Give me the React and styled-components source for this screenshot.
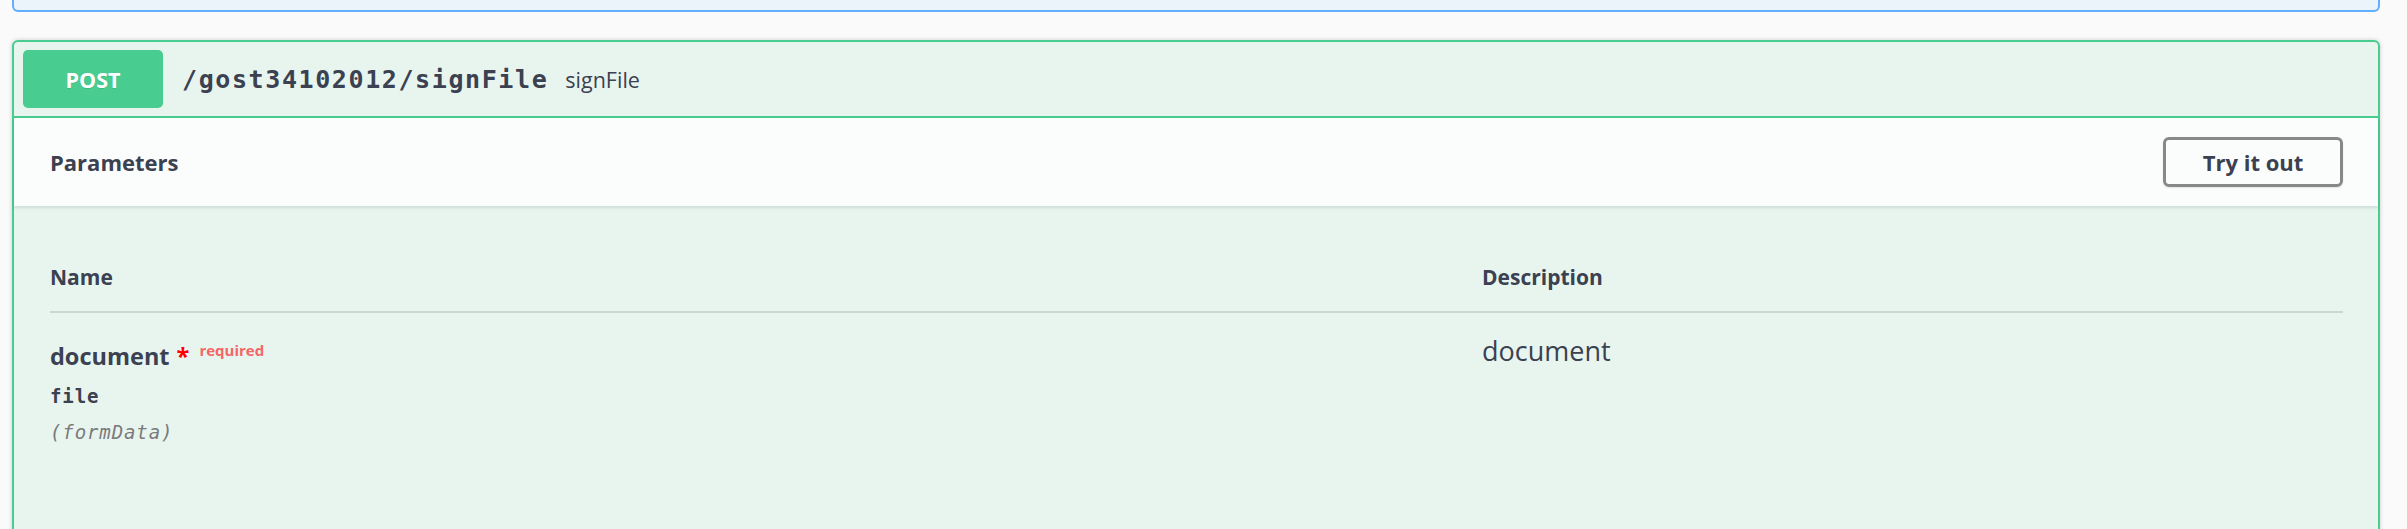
import React from "react";
import styled, { createGlobalStyle } from "styled-components";

const GlobalStyle = createGlobalStyle`
  html, body {
    margin: 0;
    padding: 0;
    background: #fafafa;
  }
  body {
    font-family: "Open Sans", "Noto Sans", sans-serif;
    color: #3b4151;
  }
`

const Page = styled.div`
  width: 2407px;
  height: 529px;
  overflow: hidden;
  box-sizing: border-box;
  padding: 0 27px 0 12px;
  background: #fafafa;
`
const PrevBlock = styled.div`
  height: 10px;
  background: #ebf3fb;
  border: 2px solid #61affe;
  border-top: none;
  border-radius: 0 0 6px 6px;
`
const OpBlock = styled.div`
  margin-top: 28px;
  background: #e8f5ef;
  border: 2px solid #49cc90;
  border-radius: 6px;
  box-shadow: 0 0 4px rgba(0, 0, 0, 0.19);
`
const Summary = styled.div`
  display: flex;
  align-items: center;
  padding: 8px 9px;
  border-bottom: 2px solid #49cc90;
`
const Method = styled.div`
  width: 140px;
  height: 58px;
  display: flex;
  align-items: center;
  justify-content: center;
  border-radius: 5px;
  background: #49cc90;
  color: #fff;
  font-size: 21.5px;
  font-weight: 700;
  text-shadow: 0 1px 0 rgba(0, 0, 0, 0.1);
`
const Path = styled.span`
  margin-left: 19px;
  font-family: "DejaVu Sans Mono", monospace;
  font-size: 25px;
  font-weight: 600;
  letter-spacing: 1.6px;
  color: #3b4151;
`
const SummaryDesc = styled.span`
  margin-left: 17px;
  font-size: 21.5px;
  color: #3b4151;
`
const SectionHeader = styled.div`
  position: relative;
  z-index: 1;
  height: 88px;
  box-sizing: border-box;
  display: flex;
  align-items: center;
  justify-content: space-between;
  padding: 0 35px 0 36px;
  background: #fbfdfc;
  box-shadow: 0 2px 3px rgba(0, 0, 0, 0.1);
`
const SectionTitle = styled.h4`
  margin: 0;
  font-size: 22px;
  font-weight: 700;
`
const TryButton = styled.button`
  width: 180px;
  height: 50px;
  border: 3px solid #888;
  border-radius: 6px;
  background: transparent;
  box-shadow: 0 1px 2px rgba(0, 0, 0, 0.1);
  font-family: "Open Sans", sans-serif;
  font-size: 22px;
  font-weight: 700;
  color: #3b4151;
`
const ParamsBody = styled.div`
  padding: 57px 35px 160px 36px;
`
const Row = styled.div`
  display: grid;
  grid-template-columns: 1432px 1fr;
  padding: ${p => (p.$head ? "0 0 19px" : "21px 0 0")};
  border-bottom: ${p => (p.$head ? "2px solid #ccd7d2" : "none")};
`
const HeadCell = styled.div`
  font-size: 21px;
  line-height: 29px;
  font-weight: 700;
`
const NameCell = styled.div`
  display: flex;
  flex-direction: column;
`
const ParamName = styled.div`
  font-size: 23.5px;
  line-height: 32px;
  font-weight: 700;
`
const Star = styled.span`
  margin-left: 7px;
  color: #f00;
`
const Required = styled.span`
  margin-left: 10px;
  vertical-align: 9px;
  font-size: 15px;
  font-weight: 700;
  color: #f46666;
`
const MonoLine = styled.div`
  margin-top: ${p => p.$gap}px;
  font-family: "DejaVu Sans Mono", monospace;
  font-size: 19px;
  line-height: 24px;
  letter-spacing: 0.9px;
  font-weight: ${p => (p.$muted ? 400 : 600)};
  font-style: ${p => (p.$muted ? "italic" : "normal")};
  color: ${p => (p.$muted ? "#7a7a7a" : "#3b4151")};
`
const DescCell = styled.div`
  font-size: 27px;
  line-height: 34px;
`

export default function App() {
  return (
    <>
      <GlobalStyle />
      <Page>
        <PrevBlock />
        <OpBlock>
          <Summary>
            <Method>POST</Method>
            <Path>/gost34102012/signFile</Path>
            <SummaryDesc>signFile</SummaryDesc>
          </Summary>
          <SectionHeader>
            <SectionTitle>Parameters</SectionTitle>
            <TryButton>Try it out</TryButton>
          </SectionHeader>
          <ParamsBody>
            <Row $head>
              <HeadCell>Name</HeadCell>
              <HeadCell>Description</HeadCell>
            </Row>
            <Row>
              <NameCell>
                <ParamName>
                  document<Star>*</Star>
                  <Required>required</Required>
                </ParamName>
                <MonoLine $gap={12}>file</MonoLine>
                <MonoLine $gap={12} $muted>(formData)</MonoLine>
              </NameCell>
              <DescCell>document</DescCell>
            </Row>
          </ParamsBody>
        </OpBlock>
      </Page>
    </>
  );
}
